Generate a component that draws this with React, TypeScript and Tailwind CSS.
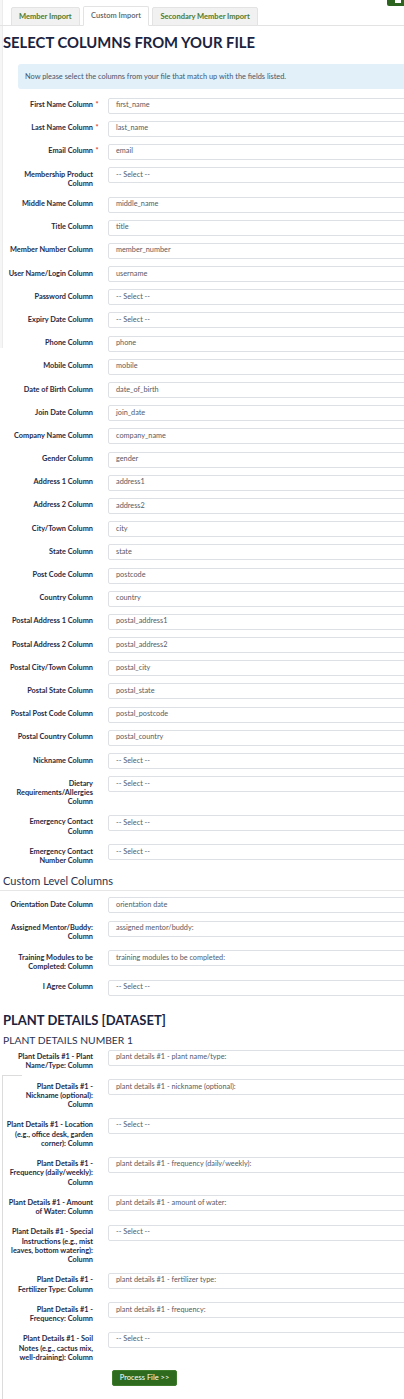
type Field = {
  label: string
  value?: string
  required?: boolean
}

// labels keep the line breaks seen in the page
const mainFields: Field[] = [
  { label: "First Name Column", value: "first_name", required: true },
  { label: "Last Name Column", value: "last_name", required: true },
  { label: "Email Column", value: "email", required: true },
  { label: "Membership Product\nColumn" },
  { label: "Middle Name Column", value: "middle_name" },
  { label: "Title Column", value: "title" },
  { label: "Member Number Column", value: "member_number" },
  { label: "User Name/Login Column", value: "username" },
  { label: "Password Column" },
  { label: "Expiry Date Column" },
  { label: "Phone Column", value: "phone" },
  { label: "Mobile Column", value: "mobile" },
  { label: "Date of Birth Column", value: "date_of_birth" },
  { label: "Join Date Column", value: "join_date" },
  { label: "Company Name Column", value: "company_name" },
  { label: "Gender Column", value: "gender" },
  { label: "Address 1 Column", value: "address1" },
  { label: "Address 2 Column", value: "address2" },
  { label: "City/Town Column", value: "city" },
  { label: "State Column", value: "state" },
  { label: "Post Code Column", value: "postcode" },
  { label: "Country Column", value: "country" },
  { label: "Postal Address 1 Column", value: "postal_address1" },
  { label: "Postal Address 2 Column", value: "postal_address2" },
  { label: "Postal City/Town Column", value: "postal_city" },
  { label: "Postal State Column", value: "postal_state" },
  { label: "Postal Post Code Column", value: "postal_postcode" },
  { label: "Postal Country Column", value: "postal_country" },
  { label: "Nickname Column" },
  { label: "Dietary\nRequirements/Allergies\nColumn" },
  { label: "Emergency Contact\nColumn" },
  { label: "Emergency Contact\nNumber Column" },
]

const customFields: Field[] = [
  { label: "Orientation Date Column", value: "orientation date" },
  { label: "Assigned Mentor/Buddy:\nColumn", value: "assigned mentor/buddy:" },
  { label: "Training Modules to be\nCompleted: Column", value: "training modules to be completed:" },
  { label: "I Agree Column" },
]

const plantFields: Field[] = [
  { label: "Plant Details #1 - Plant\nName/Type: Column", value: "plant details #1 - plant name/type:" },
  { label: "Plant Details #1 -\nNickname (optional):\nColumn", value: "plant details #1 - nickname (optional):" },
  { label: "Plant Details #1 - Location\n(e.g., office desk, garden\ncorner): Column" },
  { label: "Plant Details #1 -\nFrequency (daily/weekly):\nColumn", value: "plant details #1 - frequency (daily/weekly):" },
  { label: "Plant Details #1 - Amount\nof Water: Column", value: "plant details #1 - amount of water:" },
  { label: "Plant Details #1 - Special\nInstructions (e.g., mist\nleaves, bottom watering):\nColumn" },
  { label: "Plant Details #1 -\nFertilizer Type: Column", value: "plant details #1 - fertilizer type:" },
  { label: "Plant Details #1 -\nFrequency: Column", value: "plant details #1 - frequency:" },
  { label: "Plant Details #1 - Soil\nNotes (e.g., cactus mix,\nwell-draining): Column" },
]

function FieldRow({ field }: { field: Field }) {
  return (
    <div className="mb-[7.2px] flex items-start">
      <div className="relative w-[93px] shrink-0 whitespace-pre-line pt-[2.5px] pb-[1.2px] text-right text-[7.35px] leading-[9.3px] font-bold text-[#1f2a44]">
        {field.label}
        {field.required && (
          <span className="absolute right-[-5.5px] top-[2.5px] text-[#d9363e]">*</span>
        )}
      </div>
      <div className="ml-[15px] flex h-[16px] w-[320px] shrink-0 items-center rounded-[2px] border border-[#dde1e6] bg-white px-[7px] text-[7.3px] text-[#555b66]">
        {field.value ?? "-- Select --"}
      </div>
    </div>
  )
}

export default function App() {
  return (
    <div className="relative min-h-[1399px] w-[404px] overflow-hidden bg-white font-['Lato',sans-serif]">
      {/* background panel edges */}
      <div className="absolute left-0 top-0 h-[348px] w-[3px] border-r border-[#ececec] bg-[#f6f6f6]" />
      <div className="absolute left-[2px] top-[1075px] h-[330px] w-[20px] border-l border-t border-[#dcdcdc]" />

      {/* top right button */}
      <div className="absolute right-[-4px] top-[-12px] flex h-[18px] w-[21px] items-end justify-center rounded-[2px] bg-[#2d6420] pb-[3px]">
        <div className="h-[4px] w-[6px] bg-white" />
      </div>

      {/* Tabs */}
      <div className="relative flex items-end gap-[3.5px] border-b border-[#e3e3e3] pl-[11px] pt-[6px]">
        <div className="mb-[-1px] flex h-[19px] items-center rounded-t-[2px] border border-[#e3e3e3] bg-[#f1f1f1] px-[7px] text-[7.5px] font-bold text-[#4c7a2b]">
          Member Import
        </div>
        <div className="mb-[-1px] flex h-[20px] items-center rounded-t-[2px] border border-b-white border-[#e3e3e3] bg-white px-[7px] text-[7.5px] font-semibold text-[#5a5f66]">
          Custom Import
        </div>
        <div className="mb-[-1px] flex h-[19px] items-center rounded-t-[2px] border border-[#e3e3e3] bg-[#f1f1f1] px-[7px] text-[7.5px] font-bold text-[#4c7a2b]">
          Secondary Member Import
        </div>
      </div>

      <h1 className="mt-[7px] pl-[3px] text-[14.8px] leading-[19px] font-bold text-[#1b2340]">
        SELECT COLUMNS FROM YOUR FILE
      </h1>

      <div className="ml-[18px] mt-[12px] flex h-[25px] w-[400px] items-center rounded-[3px] bg-[#e2f0fa] pl-[7px] text-[7.4px] text-[#44556a]">
        Now please select the columns from your file that match up with the fields listed.
      </div>

      <div className="mt-[8.5px]">
        {mainFields.map((f) => (
          <FieldRow key={f.label} field={f} />
        ))}
      </div>

      <h2 className="mb-[6.5px] border-b border-[#e6e6e6] pb-[3px] pl-[3px] text-[11px] leading-[13px] text-[#2a3350]">
        Custom Level Columns
      </h2>

      <div>
        {customFields.map((f) => (
          <FieldRow key={f.label} field={f} />
        ))}
      </div>

      <h2 className="mt-[17px] pl-[3px] text-[13px] leading-[15px] font-bold text-[#1b2340]">
        PLANT DETAILS [DATASET]
      </h2>
      <h3 className="mt-[6px] mb-[3px] pl-[3px] text-[10.3px] leading-[13px] text-[#2a3350]">
        PLANT DETAILS NUMBER 1
      </h3>

      <div>
        {plantFields.map((f) => (
          <FieldRow key={f.label} field={f} />
        ))}
      </div>

      <div className="mt-[-1px] pl-[112px]">
        <button className="flex h-[16px] w-[65px] items-center justify-center rounded-[2px] border border-[#3f7d2c] bg-[#2f6b1f] text-[7.5px] text-white">
          Process File &gt;&gt;
        </button>
      </div>
    </div>
  )
}
